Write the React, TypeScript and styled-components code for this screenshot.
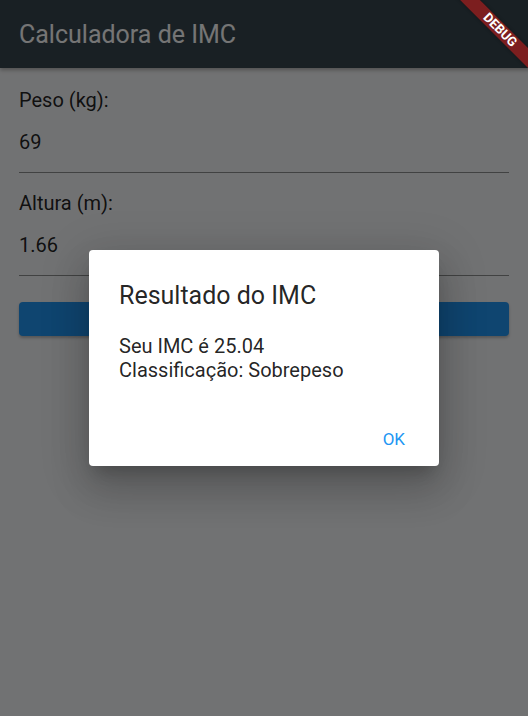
import React from 'react';
import styled, { createGlobalStyle } from 'styled-components';

const GlobalStyle = createGlobalStyle`
  html, body {
    margin: 0;
    padding: 0;
    height: 100%;
  }
  body {
    font-family: Roboto, "Noto Sans", Arial, sans-serif;
  }
  #root {
    height: 100%;
  }
`;

const Screen = styled.div`
  position: relative;
  height: 100vh;
  background: #f7f8fa;
  overflow: hidden;
`;

const AppBar = styled.header`
  height: 68px;
  display: flex;
  align-items: center;
  padding: 0 19px;
  background: #37474f;
  color: #ffffff;
  font-size: 25px;
  box-shadow: 0 2px 4px rgba(0, 0, 0, 0.3);
`;

const Form = styled.main`
  display: flex;
  flex-direction: column;
  padding: 21px 19px 0;
`;

const Label = styled.div`
  font-size: 20px;
  line-height: 23px;
  color: rgba(0, 0, 0, 0.87);
`;

const Field = styled.div<{ $gap: number }>`
  padding: 19px 0 18px;
  margin-bottom: ${(p) => p.$gap}px;
  border-bottom: 1px solid rgba(0, 0, 0, 0.42);
  font-size: 20px;
  line-height: 23px;
  color: rgba(0, 0, 0, 0.87);
`;

const CalcButton = styled.button`
  height: 34px;
  border: none;
  border-radius: 4px;
  background: #2196f3;
  color: #ffffff;
  font-family: inherit;
  font-size: 17px;
  box-shadow: 0 2px 3px rgba(0, 0, 0, 0.25);
`;

const Scrim = styled.div`
  position: absolute;
  inset: 0;
  display: flex;
  align-items: center;
  justify-content: center;
  background: rgba(0, 0, 0, 0.54);
`;

const Dialog = styled.div`
  width: 350px;
  display: flex;
  flex-direction: column;
  padding: 31px 0 17px;
  background: #ffffff;
  border-radius: 4px;
  box-shadow: 0 11px 15px -7px rgba(0, 0, 0, 0.2), 0 24px 38px 3px rgba(0, 0, 0, 0.14),
    0 9px 46px 8px rgba(0, 0, 0, 0.12);
`;

const DialogTitle = styled.div`
  padding: 0 30px;
  font-size: 25px;
  line-height: 29px;
  color: rgba(0, 0, 0, 0.87);
`;

const DialogContent = styled.div`
  margin-top: 25px;
  padding: 0 30px;
  font-size: 20px;
  line-height: 23.5px;
  color: rgba(0, 0, 0, 0.87);
`;

const Actions = styled.div`
  margin-top: 47px;
  display: flex;
  justify-content: flex-end;
  padding-right: 24px;
`;

const TextButton = styled.button`
  padding: 0 10px;
  border: none;
  background: none;
  color: #2196f3;
  font-family: inherit;
  font-size: 17px;
  line-height: 20px;
`;

const DebugBanner = styled.div`
  position: absolute;
  top: 23px;
  left: 440px;
  width: 120px;
  height: 14px;
  transform: rotate(45deg);
  background: rgba(183, 28, 28, 0.627);
  box-shadow: 0 0 4px rgba(0, 0, 0, 0.3);
  color: #ffffff;
  font-size: 13px;
  font-weight: 700;
  line-height: 14px;
  text-align: center;
`;

export default function App() {
  return (
    <Screen>
      <GlobalStyle />
      <AppBar>Calculadora de IMC</AppBar>
      <Form>
        <Label>Peso (kg):</Label>
        <Field $gap={19}>69</Field>
        <Label>Altura (m):</Label>
        <Field $gap={26}>1.66</Field>
        <CalcButton>Calcular IMC</CalcButton>
      </Form>
      <Scrim>
        <Dialog>
          <DialogTitle>Resultado do IMC</DialogTitle>
          <DialogContent>
            Seu IMC é 25.04
            <br />
            Classificação: Sobrepeso
          </DialogContent>
          <Actions>
            <TextButton>OK</TextButton>
          </Actions>
        </Dialog>
      </Scrim>
      <DebugBanner>DEBUG</DebugBanner>
    </Screen>
  );
}
